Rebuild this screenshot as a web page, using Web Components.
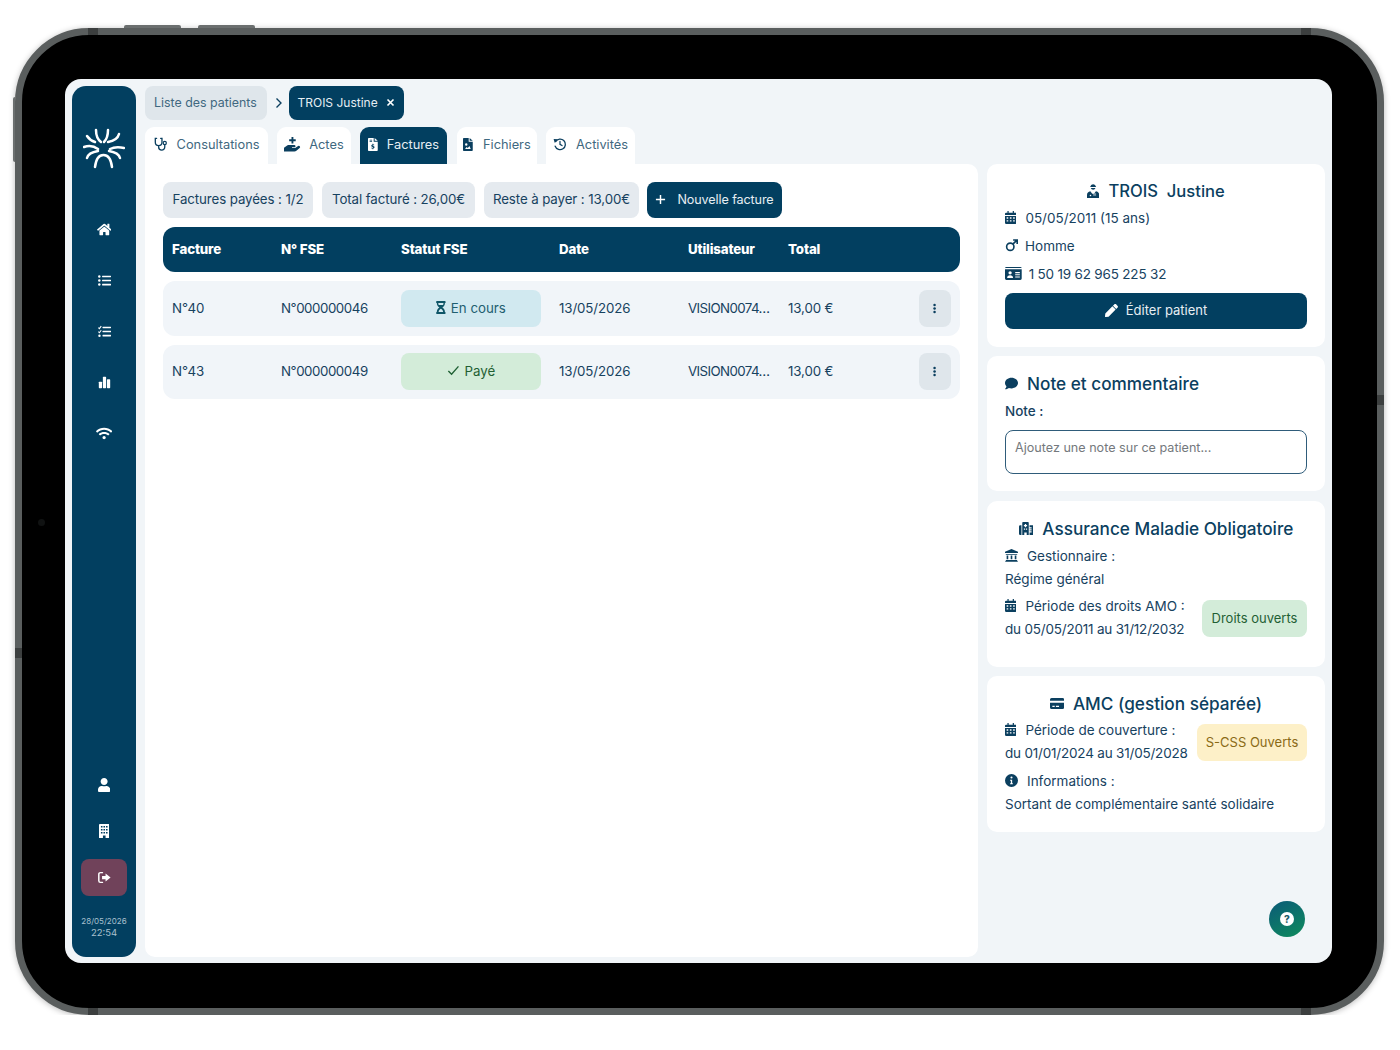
<!doctype html>
<html lang="fr">
<head>
<meta charset="utf-8">
<title>Factures</title>
<style>
  html, body { margin: 0; background: #fff; }
  body { font-family: Inter, "Noto Sans", sans-serif; color: #0b3f5f; }
</style>
</head>
<body>
<app-device>
  <app-sidebar slot="sidebar"></app-sidebar>
  <app-crumbs slot="crumbs"></app-crumbs>
  <app-tabs slot="tabs"></app-tabs>
  <app-invoices slot="main"></app-invoices>

  <info-card slot="side" height="183" top="17">
    <card-title icon="doctor" center style="font-size:16.600px">TROIS&nbsp; Justine</card-title>
    <info-line icon="calendar" y="13">05/05/2011 (15 ans)</info-line>
    <info-line icon="mars" y="13" gap="7">Homme</info-line>
    <info-line icon="idcard" y="13" gap="7" tight>1 50 19 62 965 225 32</info-line>
    <wide-button>Éditer patient</wide-button>
  </info-card>

  <info-card slot="side" height="135" top="17">
    <card-title icon="comment" style="font-size:17.200px">Note et commentaire</card-title>
    <info-line y="14" weight="500">Note :</info-line>
    <note-box>Ajoutez une note sur ce patient...</note-box>
  </info-card>

  <info-card slot="side" height="166" top="17" style="margin-top:1px">
    <card-title icon="hospital" center style="font-size:17.200px">Assurance Maladie Obligatoire</card-title>
    <info-line icon="bank" y="14" gap="9">Gestionnaire :</info-line>
    <info-line y="8">Régime général</info-line>
    <split-row badge="Droits ouverts" tone="green" width="105" y="12">
      <info-line icon="calendar">Période des droits AMO :</info-line>
      <info-line tight>du 05/05/2011 au 31/12/2032</info-line>
    </split-row>
  </info-card>

  <info-card slot="side" height="156" top="17">
    <card-title icon="card" center style="font-size:17.200px">AMC (gestion séparée)</card-title>
    <split-row badge="S-CSS Ouverts" tone="yellow" width="110" y="13">
      <info-line icon="calendar">Période de couverture :</info-line>
      <info-line tight>du 01/01/2024 au 31/05/2028</info-line>
    </split-row>
    <info-line icon="info" y="13" gap="9">Informations :</info-line>
    <info-line>Sortant de complémentaire santé solidaire</info-line>
  </info-card>
</app-device>

<script>
const ICONS = {
  home: ["0 0 576 512", '<path d="M280.37 148.26L96 300.11V464a16 16 0 0 0 16 16l112.06-.29a16 16 0 0 0 15.92-16V368a16 16 0 0 1 16-16h64a16 16 0 0 1 16 16v95.64a16 16 0 0 0 16 16.05L464 480a16 16 0 0 0 16-16V300L295.67 148.26a12.19 12.19 0 0 0-15.3 0zM571.6 251.47L488 182.56V44.05a12 12 0 0 0-12-12h-56a12 12 0 0 0-12 12v72.61L318.47 43a48 48 0 0 0-61 0L4.34 251.47a12 12 0 0 0-1.6 16.9l25.5 31A12 12 0 0 0 45.15 301l235.22-193.74a12.19 12.19 0 0 1 15.3 0L530.9 301a12 12 0 0 0 16.9-1.6l25.5-31a12 12 0 0 0-1.7-16.93z"/>'],
  list: ["0 0 16 16", '<circle cx="1.6" cy="3" r="1.5"/><circle cx="1.6" cy="8" r="1.5"/><circle cx="1.6" cy="13" r="1.5"/><rect x="5" y="2" width="11" height="2" rx=".5"/><rect x="5" y="7" width="11" height="2" rx=".5"/><rect x="5" y="12" width="11" height="2" rx=".5"/>'],
  tasks: ["0 0 16 16", '<path d="M.4 3.2l1.3 1.3L4 1.4" fill="none" stroke="currentColor" stroke-width="1.3"/><path d="M.4 8.2l1.3 1.3L4 6.4" fill="none" stroke="currentColor" stroke-width="1.3"/><circle cx="1.8" cy="13.2" r="1.5"/><rect x="5.5" y="2" width="10.5" height="2" rx=".5"/><rect x="5.5" y="7" width="10.5" height="2" rx=".5"/><rect x="5.5" y="12" width="10.5" height="2" rx=".5"/>'],
  chart: ["0 0 16 16", '<rect x="1" y="7" width="4" height="8" rx=".8"/><rect x="6" y="1" width="4" height="14" rx=".8"/><rect x="11" y="4" width="4" height="11" rx=".8"/>'],
  wifi: ["0 0 640 512", '<path d="M634.91 154.88C457.74-8.99 182.19-8.93 5.09 154.88c-6.66 6.16-6.79 16.59-.35 22.98l34.24 33.97c6.14 6.1 16.02 6.23 22.4.38 145.92-133.68 371.3-133.71 517.25 0 6.38 5.85 16.26 5.71 22.4-.38l34.24-33.97c6.43-6.39 6.3-16.82-.36-22.98zM320 352c-35.35 0-64 28.65-64 64s28.65 64 64 64 64-28.65 64-64-28.65-64-64-64zm202.67-83.59c-115.26-101.93-290.21-101.82-405.34 0-6.9 6.1-7.12 16.69-.57 23.15l34.44 33.99c6 5.92 15.66 6.32 22.05.8 83.95-72.57 209.74-72.41 293.49 0 6.39 5.52 16.05 5.13 22.05-.8l34.44-33.99c6.56-6.46 6.33-17.06-.56-23.15z"/>'],
  user: ["0 0 448 512", '<path d="M224 256c70.7 0 128-57.3 128-128S294.7 0 224 0 96 57.3 96 128s57.3 128 128 128zm89.6 32h-16.7c-22.2 10.2-46.9 16-72.9 16s-50.6-5.8-72.9-16h-16.7C60.2 288 0 348.2 0 422.4V464c0 26.5 21.5 48 48 48h352c26.5 0 48-21.5 48-48v-41.6c0-74.2-60.2-134.4-134.4-134.4z"/>'],
  building: ["0 0 12 16", '<path fill-rule="evenodd" d="M1 0h10a1 1 0 0 1 1 1v15H7.5v-3h-3v3H0V1a1 1 0 0 1 1-1zM2.2 2.2v1.8h1.8V2.200zM5.100 2.200v1.800h1.800V2.200zM8 2.200v1.800h1.800V2.200zM2.200 5.600v1.800h1.800V5.600zM5.100 5.600v1.800h1.800V5.600zM8 5.600v1.800h1.800V5.600zM2.200 9v1.800h1.800V9zM5.100 9v1.800h1.800V9zM8 9v1.800h1.800V9z"/>'],
  logout: ["0 0 16 16", '<path d="M5.500 2H3a2 2 0 0 0-2 2v8a2 2 0 0 0 2 2h2.500" fill="none" stroke="currentColor" stroke-width="1.800" stroke-linecap="round"/><path d="M9.300 3.200L15.500 8l-6.200 4.800V10H5V6h4.300z"/>'],
  chevron: ["0 0 10 16", '<path d="M2 2l6 6-6 6" fill="none" stroke="currentColor" stroke-width="1.800"/>'],
  times: ["0 0 12 12", '<path d="M2 2l8 8M10 2l-8 8" fill="none" stroke="currentColor" stroke-width="2.200"/>'],
  plus: ["0 0 12 12", '<path d="M6 1v10M1 6h10" fill="none" stroke="currentColor" stroke-width="1.600"/>'],
  check: ["0 0 14 12", '<path d="M1.500 6.500L5 10l7.500-8.500" fill="none" stroke="currentColor" stroke-width="1.500"/>'],
  kebab: ["0 0 4 14", '<circle cx="2" cy="2.500" r="1.600"/><circle cx="2" cy="7" r="1.600"/><circle cx="2" cy="11.500" r="1.600"/>'],
  hourglass: ["0 0 12 16", '<path fill-rule="evenodd" d="M1 0h10a.8.8 0 0 1 .8.8v1a.8.8 0 0 1-.8.8c0 2.600-1.400 4.400-3.200 5.400C9.600 9 11 10.800 11 13.400a.8.8 0 0 1 .8.8v1a.8.8 0 0 1-.8.8H1a.8.8 0 0 1-.8-.8v-1a.8.8 0 0 1 .8-.8C1 10.800 2.400 9 4.200 8 2.400 7 1 5.200 1 2.600A.8.8 0 0 1 .2 1.800v-1A.8.8 0 0 1 1 0zm1.800 2.600c0 .8.200 1.500.5 2.200h5.400c.3-.7.500-1.400.500-2.200zM6 9.400c-1.500.5-2.500 2-2.800 4h5.600c-.3-2-1.300-3.500-2.800-4z"/>'],
  stethoscope: ["0 0 16 16", '<path d="M3 1.500H1.500v4.500a3.800 3.800 0 0 0 7.600 0V1.500H7.600M5.300 10v1.500a3.500 3.500 0 0 0 7 0V9" fill="none" stroke="currentColor" stroke-width="1.500" stroke-linecap="round"/><circle cx="12.300" cy="6.800" r="1.800" fill="none" stroke="currentColor" stroke-width="1.400"/>'],
  hand: ["0 0 18 16", '<path d="M8 0h2v2.500h2.500v2H10V7H8V4.500H5.500v-2H8z"/><path d="M0 11.500l3-2.300c.8-.6 1.700-.7 2.500-.7H11a1.200 1.200 0 0 1 0 2.500H8.500v.8H12l3-2.100a1.300 1.300 0 0 1 1.700 2l-3.500 3c-.6.500-1.200.8-2 .8H0z"/>'],
  invoice: ["0 0 12 16", '<path fill-rule="evenodd" d="M1 0h6v4.500h5V15a1 1 0 0 1-1 1H1a1 1 0 0 1-1-1V1a1 1 0 0 1 1-1zm7.200 0L12 3.500H8.200zM2 2h3v1H2zm0 2h3v1H2zm3.500 3v.9c-1 .2-1.500.8-1.500 1.600 0 1 .8 1.300 1.500 1.500.6.200.9.300.9.600 0 .3-.3.4-.7.4-.4 0-.9-.1-1.300-.3l-.3.900c.4.200.9.300 1.400.4v.9h1v-.9c1-.2 1.500-.8 1.500-1.600 0-1-.8-1.300-1.500-1.500-.6-.2-.9-.3-.9-.6 0-.3.300-.4.700-.4.400 0 .8.100 1.100.2l.3-.9c-.4-.1-.8-.2-1.200-.3V7z"/>'],
  file: ["0 0 12 16", '<path fill-rule="evenodd" d="M1 0h6v4.500h5V15a1 1 0 0 1-1 1H1a1 1 0 0 1-1-1V1a1 1 0 0 1 1-1zm7.200 0L12 3.500H8.200zM4 6.500a1.500 1.500 0 1 0 0 3 1.500 1.500 0 0 0 0-3zM2.500 13.500l2-2.500 1.300 1.200L8 9.800l1.500 3.700z"/>'],
  history: ["0 0 16 16", '<path d="M3 5.300A6 6 0 1 1 2.500 10.500" fill="none" stroke="currentColor" stroke-width="1.500" stroke-linecap="round"/><path d="M.7 2.300l5 .2-3.800 4z"/><path d="M8 5v3.400l2.300 1.400" fill="none" stroke="currentColor" stroke-width="1.400" stroke-linecap="round"/>'],
  doctor: ["0 0 14 16", '<path d="M4.200 2.200C4.600 1 5.700.2 7 .2s2.400.8 2.800 2l.7 1.300h-7z"/><path d="M4.300 4.600h5.400a2.800 2.800 0 0 1-5.400 0z"/><path d="M3.800 8.300L6 11h2l2.200-2.700c2.200.3 3.800 2 3.800 4.200V16H0v-3.500c0-2.200 1.600-3.900 3.800-4.200z"/><circle cx="4" cy="13.200" r=".9" fill="#fff"/><path d="M7 10.500h3.400v3H7z" fill="#fff" fill-opacity=".45"/>'],
  calendar: ["0 0 14 16", '<path fill-rule="evenodd" d="M3 0h1.500v2h5V0H11v2h1.500A1.500 1.500 0 0 1 14 3.500V5H0V3.500A1.500 1.500 0 0 1 1.500 2H3zM0 6h14v8.500a1.500 1.500 0 0 1-1.500 1.500h-11A1.500 1.500 0 0 1 0 14.500zm2 1.800v1.700h2V7.800zm4 0v1.700h2V7.800zm4 0v1.700h2V7.800zm-8 3.500V13h2v-1.700zm4 0V13h2v-1.700zm4 0V13h2v-1.700z"/>'],
  mars: ["0 0 16 16", '<circle cx="6.500" cy="9.500" r="4.500" fill="none" stroke="currentColor" stroke-width="2"/><path d="M10 6l4-4M10 1.200h5v5" fill="none" stroke="currentColor" stroke-width="2"/>'],
  idcard: ["0 0 18 14", '<path fill-rule="evenodd" d="M1.500 0h15A1.500 1.500 0 0 1 18 1.500v11a1.500 1.500 0 0 1-1.500 1.500h-15A1.500 1.500 0 0 1 0 12.500v-11A1.500 1.500 0 0 1 1.500 0zM0 2.500h18V1H0zM5.500 4.500a1.800 1.800 0 1 0 0 3.600 1.800 1.800 0 0 0 0-3.600zM2.300 11.800h6.400c0-1.600-1.200-2.800-3.200-2.800s-3.200 1.200-3.200 2.800zM11 5.500h5v1.200h-5zm0 2.300h5V9h-5zm0 2.300h5v1.200h-5z"/>'],
  comment: ["0 0 512 512", '<path d="M256 32C114.600 32 0 125.100 0 240c0 49.600 21.400 95 57 130.700C44.500 421.100 2.700 466 2.200 466.500c-2.200 2.300-2.800 5.700-1.500 8.700S4.800 480 8 480c66.300 0 116-31.800 140.600-51.400 32.700 12.300 69 19.400 107.400 19.400 141.400 0 256-93.100 256-208S397.400 32 256 32z"/>'],
  hospital: ["0 0 18 16", '<path fill-rule="evenodd" d="M5 0h6a1 1 0 0 1 1 1v15H9.500v-3h-3v3H4V1a1 1 0 0 1 1-1zm2.200 2.500v1.300H6v1.400h1.200v1.300h1.600V5.200H10V3.800H8.800V2.500zM6 8v1.500h1.500V8zm2.500 0v1.500H10V8z"/><path d="M0 5.500A1.500 1.500 0 0 1 1.500 4H3v12H1.500A1.500 1.500 0 0 1 0 14.500zM13 4h3.500A1.500 1.500 0 0 1 18 5.500v9a1.500 1.500 0 0 1-1.500 1.500H13v-3h2.500v-1.500H13v-1h2.500V9H13V8h2.500V6.500H13z"/>'],
  bank: ["0 0 16 16", '<path d="M8 0l8 3.500V5H0V3.500zM1 6h14v1H1zM2 8h2v4.500H2zM7 8h2v4.500H7zM12 8h2v4.500h-2zM1 13.500h14V15H1zM0 15.500h16V16H0z"/>'],
  card: ["0 0 18 14", '<path fill-rule="evenodd" d="M2 0h14a2 2 0 0 1 2 2v1.500H0V2a2 2 0 0 1 2-2zM0 6h18v6a2 2 0 0 1-2 2H2a2 2 0 0 1-2-2zm3 4v1.500h3V10zm4.500 0v1.500h4V10z"/>'],
  info: ["0 0 16 16", '<path fill-rule="evenodd" d="M8 0a8 8 0 1 1 0 16A8 8 0 0 1 8 0zm0 3a1.300 1.300 0 1 0 0 2.600A1.300 1.300 0 0 0 8 3zM6.300 7v1.300h.9v3H6.300v1.200h3.400v-1.200h-.9V7z"/>'],
  pen: ["0 0 512 512", '<path d="M290.740 93.240l128.020 128.020-277.990 277.990-114.140 12.600C11.350 513.540-1.560 500.620.14 485.340l12.700-114.220 277.900-277.880zm207.200-19.060l-60.110-60.110c-18.750-18.750-49.160-18.750-67.910 0l-56.550 56.550 128.020 128.020 56.550-56.550c18.750-18.760 18.750-49.160 0-67.910z"/>'],
};

class AppIcon extends HTMLElement {
  connectedCallback() {
    const [box, body] = ICONS[this.getAttribute("name")] || ICONS.info;
    const size = this.getAttribute("size") || 14;
    if (!this.shadowRoot) this.attachShadow({ mode: "open" });
    this.shadowRoot.innerHTML = `
      <style>:host { display: inline-flex; flex: none; align-items: center; justify-content: center; line-height: 0; }</style>
      <svg viewBox="${box}" height="${size}" fill="currentColor">${body}</svg>`;
  }
}
customElements.define("app-icon", AppIcon);

class AppDevice extends HTMLElement {
  constructor() {
    super();
    this.attachShadow({ mode: "open" }).innerHTML = `
      <style>
        :host {
          display: block; position: relative; box-sizing: border-box;
          width: 1369px; height: 987px; margin: 28px 0 0 15px; padding: 44px 45px 45px 43px;
          background: #000; border: 7px solid #5a5e5e; border-radius: 74px;
          box-shadow: 0 1px 6px rgba(0,0,0,.28);
        }
        .screen {
          display: flex; gap: 9px; box-sizing: border-box; height: 100%; padding: 7px 7px 6px;
          background: #f1f5f8; border-radius: 16px;
        }
        .content { display: flex; flex-direction: column; flex: 1; min-width: 0; }
        .panes { display: flex; gap: 9px; flex: 1; min-height: 0; }
        .side { display: flex; flex-direction: column; gap: 9px; width: 338px; flex: none; }
        .hw { position: absolute; background: #6b6f6f; }
        .notch { position: absolute; background: #3c3f3f; }
        .help {
          position: absolute; right: 72px; bottom: 71px; width: 36px; height: 36px; border-radius: 50%;
          background: linear-gradient(150deg, #0b5a78, #0f8c5c);
          display: flex; align-items: center; justify-content: center;
        }
        .help span {
          width: 14px; height: 14px; border-radius: 50%; background: #fff; color: #1c5a66;
          font: 800 10px/14px Inter, sans-serif; text-align: center;
        }
        .cam { position: absolute; left: 16px; top: 484px; width: 7px; height: 7px; border-radius: 50%; background: #101212; }
      </style>
      <div class="hw" style="left:102px;top:-10px;width:57px;height:3px;border-radius:2px 2px 0 0"></div>
      <div class="hw" style="left:176px;top:-10px;width:57px;height:3px;border-radius:2px 2px 0 0"></div>
      <div class="hw" style="left:-9px;top:62px;width:2px;height:65px;border-radius:2px 0 0 2px"></div>
      <div class="notch" style="left:66px;top:-7px;width:10px;height:7px"></div>
      <div class="notch" style="right:66px;top:-7px;width:10px;height:7px"></div>
      <div class="notch" style="left:66px;bottom:-7px;width:10px;height:7px"></div>
      <div class="notch" style="right:66px;bottom:-7px;width:10px;height:7px"></div>
      <div class="notch" style="left:-7px;top:613px;width:7px;height:10px"></div>
      <div class="notch" style="right:-7px;top:360px;width:7px;height:10px"></div>
      <div class="cam"></div>
      <div class="screen">
        <slot name="sidebar"></slot>
        <div class="content">
          <slot name="crumbs"></slot>
          <slot name="tabs"></slot>
          <div class="panes">
            <slot name="main"></slot>
            <div class="side"><slot name="side"></slot></div>
          </div>
        </div>
      </div>
      <div class="help"><span>?</span></div>`;
  }
}
customElements.define("app-device", AppDevice);

class AppSidebar extends HTMLElement {
  constructor() {
    super();
    const nav = ["home", "list", "tasks", "chart", "wifi"]
      .map((n) => `<div class="item"><app-icon name="${n}" size="13"></app-icon></div>`)
      .join("");
    this.attachShadow({ mode: "open" }).innerHTML = `
      <style>
        :host {
          display: flex; flex-direction: column; align-items: center; flex: none; box-sizing: border-box;
          width: 64px; padding: 42px 0 18px; background: #023f60; border-radius: 14px; color: #fff;
        }
        .logo { display: block; width: 42px; height: 42px; margin-bottom: 34px; }
        .item { display: flex; align-items: center; justify-content: center; height: 51px; }
        .foot { margin-top: auto; display: flex; flex-direction: column; align-items: center; }
        .foot .item { height: 46px; }
        .exit {
          display: flex; align-items: center; justify-content: center;
          width: 46px; height: 37px; margin-top: 5px; border-radius: 8px; background: #70425a;
        }
        .when { margin-top: 19px; font-size: 8px; line-height: 12px; text-align: center; color: #a9c0cf; }
        .when b { display: block; font-weight: 400; font-size: 9.500px; }
      </style>
      <svg class="logo" viewBox="0 0 42 42" fill="none" stroke="#fff" stroke-width="2.500" stroke-linecap="round">
        <path d="M13 2C13 7 14 11 18 14"/><path d="M25 2C25 7 24 11 21 14"/>
        <path d="M36 6C35 10 31 13 25 14"/><path d="M4 8C6 11 9 13 12 14"/>
        <path d="M1 19C6 17 11 18 15 21"/><path d="M41 20C36 19 31 19 27 21"/>
        <path d="M4 30C5 26 9 24 15 23"/><path d="M37 30C36 26 32 24 26 23"/>
        <path d="M12 39C13 31 16 27 20.500 27S28 31 29 39"/>
      </svg>
      ${nav}
      <div class="foot">
        <div class="item"><app-icon name="user" size="14"></app-icon></div>
        <div class="item"><app-icon name="building" size="14"></app-icon></div>
        <div class="exit"><app-icon name="logout" size="13"></app-icon></div>
        <div class="when">28/05/2026<b>22:54</b></div>
      </div>`;
  }
}
customElements.define("app-sidebar", AppSidebar);

class AppCrumbs extends HTMLElement {
  constructor() {
    super();
    this.attachShadow({ mode: "open" }).innerHTML = `
      <style>
        :host { display: flex; align-items: center; height: 34px; margin-bottom: 7px; font-size: 12.400px; white-space: nowrap; }
        .crumb { display: flex; align-items: center; height: 34px; padding: 0 9px 2px; box-sizing: border-box; border-radius: 8px; }
        .back { width: 122px; background: #dfe6eb; color: #3f6880; }
        .now { width: 115px; justify-content: space-between; background: #023f60; color: #e6eef3; font-size: 12px; }
        .crumbs-arrow { color: #0b3f5f; margin: 0 6px 0 8px; }
        .now app-icon { color: #fff; }
      </style>
      <span class="crumb back">Liste des patients</span>
      <app-icon class="crumbs-arrow" name="chevron" size="12"></app-icon>
      <span class="crumb now">TROIS Justine<app-icon name="times" size="9"></app-icon></span>`;
  }
}
customElements.define("app-crumbs", AppCrumbs);

class AppTabs extends HTMLElement {
  constructor() {
    super();
    const tabs = [
      ["stethoscope", "Consultations", 123, 14, 9, 0],
      ["hand", "Actes", 74, 15, 8, 0],
      ["invoice", "Factures", 87, 13, 9, 0],
      ["file", "Fichiers", 80, 13, 10, 1],
      ["history", "Activités", 89, 14, 9, 0],
    ];
    const html = tabs.map(([icon, label, w, size, gap, nudge], i) => `
      <div class="tab ${i === 2 ? "on" : ""}" style="width:${w}px;margin-left:${nudge}px">
        <app-icon name="${icon}" size="${size}"></app-icon><span style="margin-left:${gap}px">${label}</span>
      </div>`).join("");
    this.attachShadow({ mode: "open" }).innerHTML = `
      <style>
        :host { display: flex; gap: 9px; height: 37px; font-size: 12.800px; color: #3f6880; }
        .tab {
          display: flex; align-items: center; justify-content: center; box-sizing: border-box;
          height: 37px; padding-bottom: 3px; background: #fff; border-radius: 9px 9px 0 0;
        }
        .tab app-icon { color: #0b3f5f; }
        .on { background: #023f60; color: #e6eef3; }
        .on app-icon { color: #fff; }
      </style>${html}`;
  }
}
customElements.define("app-tabs", AppTabs);

class AppInvoices extends HTMLElement {
  constructor() {
    super();
    const row = (num, fse, badge) => `
      <div class="grid row">
        <span>${num}</span><span class="digits">${fse}</span>${badge}
        <span class="date">13/05/2026</span><span class="user">VISION0074…</span><span class="date">13,00 €</span>
        <button class="more" aria-label="Actions"><app-icon name="kebab" size="11"></app-icon></button>
      </div>`;
    this.attachShadow({ mode: "open" }).innerHTML = `
      <style>
        :host {
          display: block; flex: 1; min-width: 0; box-sizing: border-box; padding: 18px 18px 0;
          background: #fff; border-radius: 0 10px 10px 10px; color: #17425f; font-size: 13.300px;
        }
        .stats { display: flex; gap: 9px; margin-bottom: 9px; }
        .stat {
          display: flex; align-items: center; justify-content: center; height: 36px; padding-bottom: 2px; box-sizing: border-box;
          background: #e5eaef; border-radius: 8px; white-space: nowrap; letter-spacing: -.1px;
        }
        .new { gap: 11px; background: #023f60; color: #e6eef3; font-size: 12.600px; }
        .new app-icon { color: #fff; }
        .grid {
          display: grid; align-items: center; padding: 0 9px;
          grid-template-columns: 109px 120px 158px 129px 100px 131px 32px;
        }
        .head {
          height: 45px; margin-bottom: 9px; padding-bottom: 2px; box-sizing: border-box; background: #023f60; border-radius: 12px;
          color: #fff; font-weight: 800; letter-spacing: -.15px;
        }
        .row { height: 55px; margin-bottom: 9px; background: #f1f5f9; border-radius: 12px; }
        .row + .row { height: 54px; }
        .row > span { position: relative; top: -1px; }
        .digits { letter-spacing: -.45px; }
        .date { letter-spacing: -.12px; }
        .user { white-space: nowrap; letter-spacing: -.6px; }
        .row > .pill {
          display: flex; align-items: center; justify-content: center; gap: 5px; top: 0;
          width: 140px; height: 37px; box-sizing: border-box; padding-bottom: 2px; border-radius: 8px;
        }
        .row + .row > .pill, .row + .row > .more { margin-bottom: 1px; }
        .wait { background: #d1e9f0; color: #1f5f70; }
        .wait app-icon { color: #0e5567; }
        .paid { background: #d3ecd9; color: #1f6034; }
        .more {
          display: flex; align-items: center; justify-content: center; padding: 0; border: 0;
          width: 32px; height: 37px; border-radius: 8px; background: #dfe6eb; color: #0b3f5f;
        }
      </style>
      <div class="stats">
        <div class="stat" style="width:150px">Factures payées : 1/2</div>
        <div class="stat" style="width:153px">Total facturé : 26,00€</div>
        <div class="stat" style="width:155px;margin-right:-1px">Reste à payer : 13,00€</div>
        <div class="stat new" style="width:135px"><app-icon name="plus" size="11"></app-icon>Nouvelle facture</div>
      </div>
      <div class="grid head">
        <span>Facture</span><span>N° FSE</span><span>Statut FSE</span><span>Date</span><span>Utilisateur</span><span>Total</span>
      </div>
      ${row("N°40", "N°000000046", `<span class="pill wait"><app-icon name="hourglass" size="13"></app-icon><span>En cours</span></span>`)}
      ${row("N°43", "N°000000049", `<span class="pill paid"><app-icon name="check" size="11"></app-icon><span>Payé</span></span>`)}`;
  }
}
customElements.define("app-invoices", AppInvoices);

class InfoCard extends HTMLElement {
  constructor() {
    super();
    this.attachShadow({ mode: "open" }).innerHTML = `
      <style>
        :host {
          display: block; box-sizing: border-box; padding: 0 18px; background: #fff; border-radius: 10px;
          color: #17425f; font-size: 13.500px;
        }
      </style><slot></slot>`;
  }
  connectedCallback() {
    this.style.height = this.getAttribute("height") + "px";
    this.style.paddingTop = this.getAttribute("top") + "px";
  }
}
customElements.define("info-card", InfoCard);

class CardTitle extends HTMLElement {
  constructor() {
    super();
    this.attachShadow({ mode: "open" }).innerHTML = `
      <style>
        :host {
          display: flex; align-items: center; gap: 9px; height: 20px; color: #0b3f5f;
          font-size: 17px; font-weight: 500;
        }
        :host([center]) { justify-content: center; }
        .i { display: inline-flex; }
      </style><span class="i"></span><slot></slot>`;
  }
  connectedCallback() {
    const name = this.getAttribute("icon");
    const size = name === "card" ? 11 : name === "doctor" ? 14 : 13;
    this.shadowRoot.querySelector(".i").innerHTML = `<app-icon name="${name}" size="${size}"></app-icon>`;
  }
}
customElements.define("card-title", CardTitle);

class InfoLine extends HTMLElement {
  constructor() {
    super();
    this.attachShadow({ mode: "open" }).innerHTML = `
      <style>
        :host { display: flex; align-items: center; height: 23px; white-space: nowrap; }
        :host([tight]) { letter-spacing: -.2px; }
        .i { display: inline-flex; color: #0b3f5f; }
      </style><span class="i"></span><slot></slot>`;
  }
  connectedCallback() {
    const icon = this.getAttribute("icon");
    const slotIcon = this.shadowRoot.querySelector(".i");
    if (icon) {
      slotIcon.innerHTML = `<app-icon name="${icon}" size="13"></app-icon>`;
      slotIcon.style.marginRight = (this.getAttribute("gap") || 9) + "px";
    }
    if (this.hasAttribute("y")) this.style.marginTop = (this.getAttribute("y") - 8) + "px";
    if (this.hasAttribute("weight")) this.style.fontWeight = this.getAttribute("weight");
  }
}
customElements.define("info-line", InfoLine);

class WideButton extends HTMLElement {
  constructor() {
    super();
    this.attachShadow({ mode: "open" }).innerHTML = `
      <style>
        :host {
          display: flex; align-items: center; justify-content: center; gap: 8px; box-sizing: border-box;
          height: 36px; margin-top: 8px; padding-bottom: 2px;
          background: #023f60; border-radius: 8px; color: #e6eef3; font-size: 13px;
        }
        app-icon { color: #fff; }
      </style><app-icon name="pen" size="13"></app-icon><slot></slot>`;
  }
}
customElements.define("wide-button", WideButton);

class NoteBox extends HTMLElement {
  constructor() {
    super();
    this.attachShadow({ mode: "open" }).innerHTML = `
      <style>
        :host {
          display: block; box-sizing: border-box; height: 44px; margin-top: 8px; padding: 8px 9px;
          border: 1.500px solid #2f5c7a; border-radius: 8px; color: #74797d; font-size: 12.600px; line-height: 18px;
        }
      </style><slot></slot>`;
  }
}
customElements.define("note-box", NoteBox);

class SplitRow extends HTMLElement {
  constructor() {
    super();
    this.attachShadow({ mode: "open" }).innerHTML = `
      <style>
        :host { display: flex; align-items: center; justify-content: space-between; }
        .badge {
          display: flex; align-items: center; justify-content: center; flex: none; margin-top: 2px;
          height: 37px; border-radius: 8px; white-space: nowrap; font-size: 13px; padding-bottom: 1px; box-sizing: border-box;
        }
        .green { background: #d3ecd9; color: #1f6034; }
        .yellow { background: #fdf0c8; color: #8a6a16; }
      </style><div><slot></slot></div><span class="badge"></span>`;
  }
  connectedCallback() {
    const badge = this.shadowRoot.querySelector(".badge");
    badge.textContent = this.getAttribute("badge");
    badge.style.width = this.getAttribute("width") + "px";
    badge.classList.add(this.getAttribute("tone"));
    this.style.marginTop = (this.getAttribute("y") - 8) + "px";
  }
}
customElements.define("split-row", SplitRow);
</script>
</body>
</html>
